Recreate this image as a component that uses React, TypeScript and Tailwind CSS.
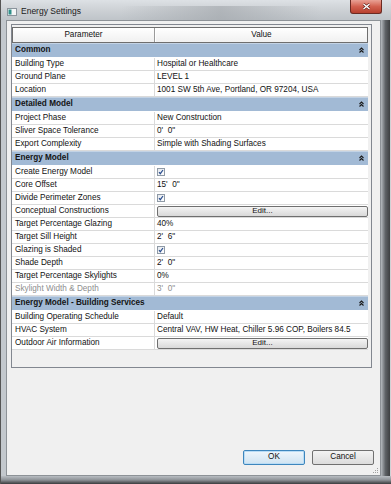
import React from 'react'

type Row = { label: string; value?: string; kind?: 'text' | 'check' | 'edit' | 'disabled' }

const sections: { title: string; rows: Row[] }[] = [
  {
    title: 'Common',
    rows: [
      { label: 'Building Type', value: 'Hospital or Healthcare' },
      { label: 'Ground Plane', value: 'LEVEL 1' },
      { label: 'Location', value: '1001 SW 5th Ave, Portland, OR 97204, USA' },
    ],
  },
  {
    title: 'Detailed Model',
    rows: [
      { label: 'Project Phase', value: 'New Construction' },
      { label: 'Sliver Space Tolerance', value: "0'  0\"" },
      { label: 'Export Complexity', value: 'Simple with Shading Surfaces' },
    ],
  },
  {
    title: 'Energy Model',
    rows: [
      { label: 'Create Energy Model', kind: 'check' },
      { label: 'Core Offset', value: "15'  0\"" },
      { label: 'Divide Perimeter Zones', kind: 'check' },
      { label: 'Conceptual Constructions', kind: 'edit' },
      { label: 'Target Percentage Glazing', value: '40%' },
      { label: 'Target Sill Height', value: "2'  6\"" },
      { label: 'Glazing is Shaded', kind: 'check' },
      { label: 'Shade Depth', value: "2'  0\"" },
      { label: 'Target Percentage Skylights', value: '0%' },
      { label: 'Skylight Width & Depth', value: "3'  0\"", kind: 'disabled' },
    ],
  },
  {
    title: 'Energy Model - Building Services',
    rows: [
      { label: 'Building Operating Schedule', value: 'Default' },
      { label: 'HVAC System', value: 'Central VAV, HW Heat, Chiller 5.96 COP, Boilers 84.5' },
      { label: 'Outdoor Air Information', kind: 'edit' },
    ],
  },
]

function Collapse() {
  return (
    <svg width="5" height="6" viewBox="0 0 5 6" className="absolute right-[4px] top-[3px]">
      <path d="M0.5 3 L2.5 1 L4.5 3 M0.5 5.5 L2.5 3.5 L4.5 5.5" stroke="#1a1a1a" strokeWidth="1.1" fill="none" />
    </svg>
  )
}

function Check() {
  return (
    <div className="w-[8px] h-[8px] border border-[#8f9aa6] bg-gradient-to-br from-[#e4e8ee] to-[#ffffff] flex items-center justify-center">
      <svg width="6" height="6" viewBox="0 0 6 6">
        <path d="M1 3.2 L2.3 4.7 L5 1" stroke="#2b4f8f" strokeWidth="1.2" fill="none" />
      </svg>
    </div>
  )
}

function EditButton() {
  return (
    <div className="h-[11px] w-full rounded-[2px] border border-[#6f6f6f] bg-gradient-to-b from-[#f4f4f4] to-[#d9d9d9] flex items-center justify-center text-[8px] leading-none text-[#111]">
      Edit...
    </div>
  )
}

export default function App() {
  return (
    <div className="w-[391px] h-[484px] bg-[#c3c8cd] flex flex-col font-['Liberation_Sans',Arial,sans-serif] text-[#111] overflow-hidden border-l border-[#555]">
      {/* title bar */}
      <div className="relative h-[20px] shrink-0 bg-gradient-to-b from-[#dde1e5] via-[#cdd1d5] to-[#bfc4c9] flex items-center">
        <div className="w-[200px] h-[14px] absolute left-[120px] top-[6px] bg-gradient-to-r from-transparent via-[#9ea3a8] to-transparent opacity-60" />
        <svg width="10" height="8" viewBox="0 0 10 8" className="ml-[6px] mt-[3px] relative">
          <rect x="0.5" y="0.5" width="9" height="7" fill="#f4f6f7" stroke="#8a949c" />
          <rect x="1.5" y="1.5" width="3" height="5" fill="#2f8f8a" />
        </svg>
        <span className="relative ml-[4px] mt-[3px] text-[8.5px] text-[#1b1b1b]">Energy Settings</span>
        <div className="absolute right-[9px] top-0 w-[32px] h-[14px] rounded-b-[3px] border border-t-0 border-[#6b2a22] bg-gradient-to-b from-[#e9a195] via-[#d2604f] to-[#b8402e] flex items-center justify-center">
          <svg width="9" height="7" viewBox="0 0 9 7">
            <path d="M1.5 1 L7.5 6 M7.5 1 L1.5 6" stroke="#5a1d16" strokeWidth="2.6" />
            <path d="M1.5 1 L7.5 6 M7.5 1 L1.5 6" stroke="#ffffff" strokeWidth="1.5" />
          </svg>
        </div>
      </div>

      <div className="flex h-[456px] shrink-0">
        <div className="w-[5px] shrink-0" />
        {/* client area */}
        <div className="w-[375px] shrink-0 border border-[#8d9297] bg-[#f0f0f0] relative flex flex-col">
          <div className="ml-[4px] mt-[3px] w-[361px] h-[344px] border border-[#828790] bg-[#f0f0f0] pt-[2px] pr-[3px]">
            {/* header */}
            <div className="h-[16px] flex border border-[#6e6e6e] bg-gradient-to-b from-[#ffffff] to-[#f0f0f0] text-[8.2px]">
              <div className="w-[142px] shrink-0 border-r border-[#9a9a9a] flex items-center justify-center">Parameter</div>
              <div className="flex-1 border-l border-white flex items-center justify-center">Value</div>
            </div>
            {sections.map((s) => (
              <div key={s.title}>
                <div className="relative h-[15px] bg-[#a2bad5] border-t border-[#c3d3e5] border-b border-b-[#ffffff] flex items-center pl-[3px] text-[8.2px] font-bold text-[#141414]">
                  {s.title}
                  <Collapse />
                </div>
                {s.rows.map((r) => (
                  <div key={r.label} className="h-[13px] flex bg-white border-b border-[#dadada] text-[8.2px]">
                    <div
                      className={
                        'w-[143px] shrink-0 border-r border-[#dadada] pl-[3px] flex items-center ' +
                        (r.kind === 'disabled' ? 'text-[#8e8e8e]' : '')
                      }
                    >
                      {r.label}
                    </div>
                    <div
                      className={
                        'flex-1 flex items-center pl-[2px] whitespace-pre ' +
                        (r.kind === 'disabled' ? 'text-[#8e8e8e]' : '')
                      }
                    >
                      {r.kind === 'check' ? <Check /> : r.kind === 'edit' ? <EditButton /> : r.value}
                    </div>
                  </div>
                ))}
              </div>
            ))}
          </div>

          {/* buttons */}
          <div className="mt-auto mb-[10px] flex justify-end gap-[7px] pr-[6px]">
            <div className="w-[62px] h-[15px] rounded-[2px] border border-[#3d86bd] bg-gradient-to-b from-[#eef6fc] to-[#cfe3f1] shadow-[inset_0_0_0_1px_#b9dcf5] flex items-center justify-center text-[8.2px]">
              OK
            </div>
            <div className="w-[62px] h-[15px] rounded-[2px] border border-[#707070] bg-gradient-to-b from-[#f3f3f3] to-[#dcdcdc] flex items-center justify-center text-[8.2px]">
              Cancel
            </div>
          </div>
          <svg width="7" height="7" viewBox="0 0 7 7" className="absolute right-[1px] bottom-[1px]">
            <rect x="5" y="1" width="1" height="1" fill="#a0a0a0" />
            <rect x="3" y="3" width="1" height="1" fill="#a0a0a0" />
            <rect x="5" y="3" width="1" height="1" fill="#a0a0a0" />
            <rect x="1" y="5" width="1" height="1" fill="#a0a0a0" />
            <rect x="3" y="5" width="1" height="1" fill="#a0a0a0" />
            <rect x="5" y="5" width="1" height="1" fill="#a0a0a0" />
          </svg>
        </div>
        {/* right frame */}
        <div className="flex-1 bg-gradient-to-r from-[#b6bbc0] via-[#5e6266] to-[#3d3f41] border-r border-[#cfd2d5]" />
      </div>
      <div className="flex-1 bg-gradient-to-b from-[#b9bec3] via-[#8e9297] to-[#3a3c3e]" />
    </div>
  )
}
